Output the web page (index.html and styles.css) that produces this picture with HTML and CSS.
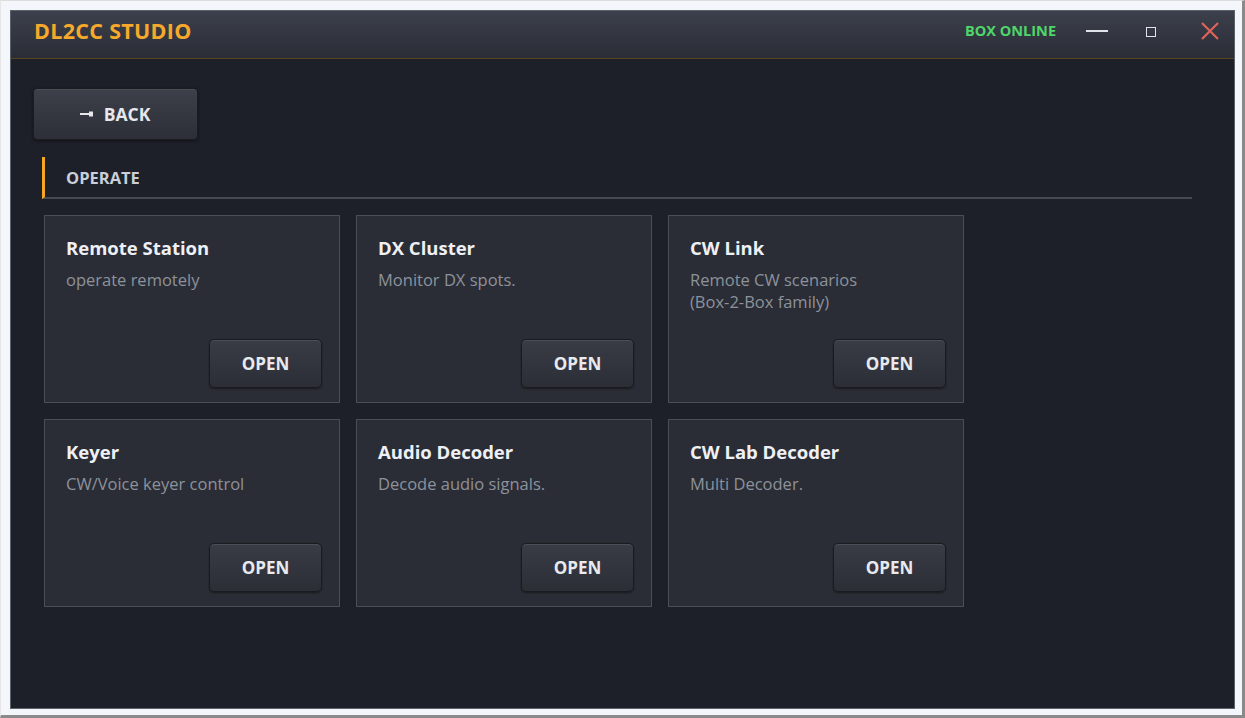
FILE: index.html
```html
<!DOCTYPE html>
<html lang="en">
<head>
  <meta charset="UTF-8" />
  <title>DL2CC Studio</title>
  <link rel="stylesheet" href="styles.css">
</head>
<body>
  <div class="window">
    <header class="titlebar">
      <h1 class="brand">DL2CC STUDIO</h1>
      <span class="status">BOX ONLINE</span>
      <div class="controls">
        <span class="ctl min"></span>
        <span class="ctl max"></span>
        <span class="ctl close">
          <svg width="20" height="20" viewBox="0 0 20 20"><path d="M2 2 L18 18 M18 2 L2 18" stroke="#e0625a" stroke-width="2.2" fill="none"/></svg>
        </span>
      </div>
    </header>

    <main class="content">
      <button class="back">
        <svg width="14" height="6" viewBox="0 0 14 6"><rect x="0" y="2" width="10" height="2" fill="#e6e8ee"/><rect x="9" y="0.5" width="4" height="5" fill="#e6e8ee"/></svg>
        BACK
      </button>

      <div class="section">OPERATE</div>

      <div class="grid">
        <div class="card">
          <div class="card-title">Remote Station</div>
          <div class="card-desc">operate remotely</div>
          <button class="open">OPEN</button>
        </div>
        <div class="card">
          <div class="card-title">DX Cluster</div>
          <div class="card-desc">Monitor DX spots.</div>
          <button class="open">OPEN</button>
        </div>
        <div class="card">
          <div class="card-title">CW Link</div>
          <div class="card-desc">Remote CW scenarios<br>(Box-2-Box family)</div>
          <button class="open">OPEN</button>
        </div>
        <div class="card">
          <div class="card-title">Keyer</div>
          <div class="card-desc">CW/Voice keyer control</div>
          <button class="open">OPEN</button>
        </div>
        <div class="card">
          <div class="card-title">Audio Decoder</div>
          <div class="card-desc">Decode audio signals.</div>
          <button class="open">OPEN</button>
        </div>
        <div class="card">
          <div class="card-title">CW Lab Decoder</div>
          <div class="card-desc">Multi Decoder.</div>
          <button class="open">OPEN</button>
        </div>
      </div>
    </main>
  </div>
</body>
</html>
```

FILE: styles.css
```css
html, body {
  margin: 0;
  height: 718px;
  overflow: hidden;
}

body {
  box-sizing: border-box;
  background: #f3f6fb;
  border-top: 1px solid #dcdcdc;
  border-left: 1px solid #e6e6e6;
  border-right: 3px solid #8a8a8a;
  border-bottom: 3px solid #8a8a8a;
  padding: 9px 7px 6px 9px;
  font-family: "Open Sans", "Noto Sans", sans-serif;
}

.window {
  height: 100%;
  box-sizing: border-box;
  border: 1px solid #5c6069;
  background: #1d2028;
  display: flex;
  flex-direction: column;
}

.titlebar {
  height: 48px;
  box-sizing: border-box;
  flex: none;
  display: flex;
  align-items: center;
  padding: 0 14px 8px 23px;
  background: linear-gradient(#3c404c, #2a2d36);
  border-bottom: 1px solid #5a4520;
}

.brand {
  margin: 0;
  font-size: 21.5px;
  font-weight: 700;
  color: #f6a92a;
  letter-spacing: 0.3px;
}

.status {
  margin-left: auto;
  font-size: 14.5px;
  font-weight: 700;
  color: #4fd66a;
}

.controls {
  display: flex;
  align-items: center;
  margin-left: 30px;
}

.ctl {
  display: flex;
  align-items: center;
  justify-content: center;
}

.min {
  width: 22px;
  height: 2px;
  background: #dfe3ea;
}

.max {
  width: 8px;
  height: 8px;
  border: 1px solid #dfe3ea;
  margin-left: 38px;
  margin-top: 2px;
}

.close {
  margin-left: 44px;
}

.content {
  padding: 29px 42px 0 22px;
}

.back {
  width: 165px;
  height: 52px;
  border: 1px solid #1a1c22;
  border-radius: 4px;
  background: linear-gradient(#3d404a, #2c2f37);
  box-shadow: 0 1px 3px rgba(0, 0, 0, 0.5), inset 0 1px 0 #4a4e58;
  color: #e6e8ee;
  font-family: inherit;
  font-size: 17.5px;
  font-weight: 700;
  display: flex;
  align-items: center;
  justify-content: center;
  gap: 10px;
  padding: 0 1px 0 0;
}

.section {
  margin: 17px 0 0 9px;
  height: 40px;
  display: flex;
  align-items: center;
  border-left: 3px solid #f5a623;
  border-bottom: 2px solid #464a54;
  padding-left: 21px;
  font-size: 16.5px;
  font-weight: 700;
  color: #c9ced8;
}

.grid {
  display: grid;
  grid-template-columns: repeat(3, 296px);
  grid-auto-rows: 188px;
  gap: 16px;
  margin: 16px 0 0 11px;
}

.card {
  box-sizing: border-box;
  background: #2a2d35;
  border: 1px solid #4a4e58;
  padding: 20px 17px 14px 21px;
  display: flex;
  flex-direction: column;
}

.card-title {
  font-size: 18.5px;
  font-weight: 700;
  color: #eef0f5;
  line-height: 24px;
}

.card-desc {
  margin-top: 9px;
  font-size: 16.5px;
  line-height: 22px;
  color: #8d929c;
}

.open {
  margin-top: auto;
  align-self: flex-end;
  width: 113px;
  height: 49px;
  border: 1px solid #191b20;
  border-radius: 5px;
  background: linear-gradient(#393c45, #2b2e35);
  box-shadow: inset 0 1px 0 #4a4e58, 0 1px 2px rgba(0, 0, 0, 0.4);
  color: #e8eaf0;
  font-family: inherit;
  font-size: 17px;
  font-weight: 700;
}
```
